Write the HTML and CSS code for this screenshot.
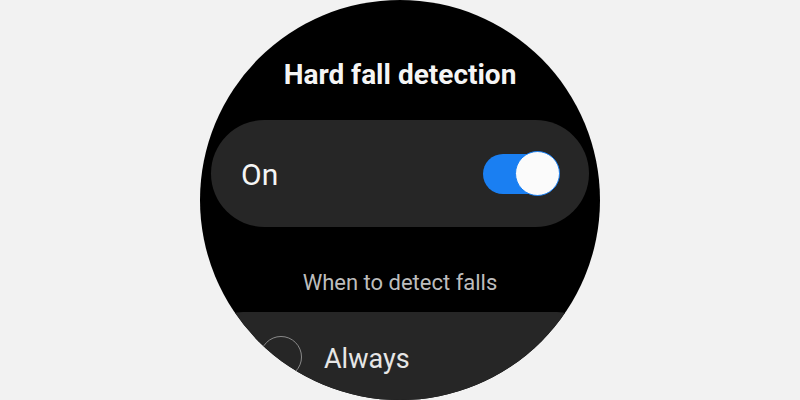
FILE: index.html
```html
<!DOCTYPE html>
<html>
<head>
<meta charset="utf-8">
<link rel="stylesheet" href="styles.css">
</head>
<body>
<div class="stage">
  <div class="watch">
    <h1 class="title">Hard fall detection</h1>
    <div class="card toggle-card">
      <span class="label">On</span>
      <span class="switch"><span class="knob"></span></span>
    </div>
    <div class="section">When to detect falls</div>
    <div class="card option-card">
      <span class="radio"></span>
      <span class="option">Always</span>
    </div>
  </div>
</div>
</body>
</html>
```
FILE: styles.css
```css
html, body {
  margin: 0;
  padding: 0;
  background: #f2f2f2;
}
.stage {
  width: 800px;
  height: 400px;
  display: flex;
  justify-content: center;
}
.watch {
  width: 400px;
  height: 400px;
  border-radius: 50%;
  background: #000;
  overflow: hidden;
  display: flex;
  flex-direction: column;
  align-items: center;
  font-family: Roboto, "Noto Sans", sans-serif;
}
.title {
  margin: 58px 0 0;
  font-size: 28px;
  font-weight: 700;
  line-height: 34px;
  color: #f5f5f5;
}
.card {
  width: 378px;
  box-sizing: border-box;
  background: #262626;
  display: flex;
  align-items: center;
  flex-shrink: 0;
}
.toggle-card {
  margin-top: 28px;
  height: 107px;
  border-radius: 54px;
  padding: 0 29px 0 30px;
  justify-content: space-between;
}
.label {
  font-size: 30px;
  color: #f5f5f5;
  line-height: 36px;
  margin-top: 2px;
}
.switch {
  width: 77px;
  height: 46px;
  display: flex;
  align-items: center;
  justify-content: flex-end;
  position: relative;
}
.switch::before {
  content: "";
  position: absolute;
  left: 0;
  top: 3px;
  width: 66px;
  height: 40px;
  border-radius: 20px;
  background: #1a7ff2;
}
.knob {
  position: relative;
  width: 43px;
  height: 43px;
  border-radius: 50%;
  background: #fbfbfb;
  border: 1.5px solid #1a7ff2;
}
.section {
  margin-top: 43px;
  font-size: 22px;
  line-height: 26px;
  color: #bdbdbd;
}
.option-card {
  margin-top: 16px;
  height: 120px;
  border-radius: 32px;
  padding: 24px 0 0 49px;
  align-items: flex-start;
  gap: 22px;
}
.radio {
  width: 40px;
  height: 40px;
  border-radius: 50%;
  border: 1.5px solid #8a8a8a;
  flex-shrink: 0;
}
.option {
  font-size: 27px;
  line-height: 36px;
  color: #e6e6e6;
  margin-top: 5px;
}
```
